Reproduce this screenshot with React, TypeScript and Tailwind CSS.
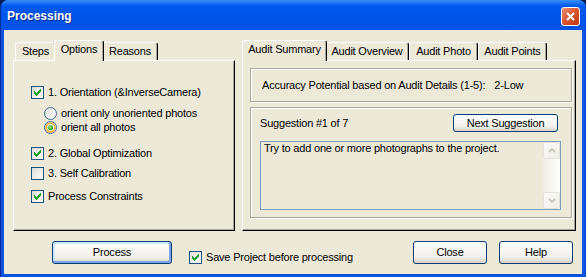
import React from 'react';

const BEIGE = 'bg-[#ece9d8]';

function Check({ checked }: { checked?: boolean }) {
  return (
    <span className="relative inline-block w-[13px] h-[13px] shrink-0 border border-[#1c5180] bg-linear-to-br from-[#dcdcd7] to-white">
      {checked && (
        <svg className="absolute left-[2px] top-[2px]" width="7" height="7" viewBox="0 0 7 7" shapeRendering="crispEdges">
          <path
            d="M6 0h1v1h-1z M5 1h2v1h-2z M0 2h1v1h-1z M4 2h3v1h-3z M0 3h2v1h-2z M3 3h3v1h-3z M0 4h5v1h-5z M1 5h3v1h-3z M2 6h1v1h-1z"
            fill="#21a121"
          />
        </svg>
      )}
    </span>
  );
}

function Radio({ checked, hot, id }: { checked?: boolean; hot?: boolean; id: string }) {
  return (
    <svg width="13" height="13" viewBox="0 0 13 13" className="shrink-0">
      <defs>
        <linearGradient id={id} x1="0" y1="0" x2="1" y2="1">
          <stop offset="0" stopColor="#dcdcd7" />
          <stop offset="1" stopColor="#ffffff" />
        </linearGradient>
        <radialGradient id={id + 'd'} cx="0.4" cy="0.35" r="0.7">
          <stop offset="0" stopColor="#9be38c" />
          <stop offset="1" stopColor="#1d9a13" />
        </radialGradient>
      </defs>
      <circle cx="6.5" cy="6.5" r="6" fill={`url(#${id})`} stroke="#3e6a92" />
      {hot && <circle cx="6.5" cy="6.5" r="4.4" fill="none" stroke="#f6b13c" strokeWidth="1.6" />}
      {checked && <circle cx="6.5" cy="6.5" r="2.6" fill={`url(#${id}d)`} />}
    </svg>
  );
}

function Btn({ children, className = '', isDefault }: { children: React.ReactNode; className?: string; isDefault?: boolean }) {
  return (
    <div
      className={`flex items-center justify-center shrink-0 rounded-[3px] border border-[#003c74] bg-linear-to-b from-white via-[#f2f1ec] via-70% to-[#d8d2c6] ${
        isDefault ? 'shadow-[inset_-1px_-1px_0_1px_#7fa1e8,inset_1px_1px_0_1px_#cee7ff]' : ''
      } ${className}`}
    >
      {children}
    </div>
  );
}

function Tab({ label, selected, className = '' }: { label: string; selected?: boolean; className?: string }) {
  if (selected) {
    return (
      <div
        className={`relative z-10 h-[21px] -mb-px ${BEIGE} border-t border-l border-white border-r border-r-black rounded-t-[3px] shadow-[inset_-1px_0_0_#aca899] flex justify-center pt-[2px] leading-[13px] ${className}`}
      >
        {label}
      </div>
    );
  }
  return (
    <div
      className={`h-[18px] border-t border-l border-white border-r border-r-black rounded-t-[3px] shadow-[inset_-1px_0_0_#aca899] flex justify-center pt-[2px] leading-[13px] ${className}`}
    >
      {label}
    </div>
  );
}

function Panel({ children, className = '' }: { children: React.ReactNode; className?: string }) {
  return (
    <div
      className={`flex-1 flex flex-col border-t border-l border-white border-r border-b border-r-black border-b-black shadow-[inset_-1px_-1px_0_#aca899] ${className}`}
    >
      {children}
    </div>
  );
}

function ScrollBtn({ down }: { down?: boolean }) {
  return (
    <div className="w-[17px] h-[17px] rounded-[2px] border border-[#e4e2da] bg-linear-to-br from-[#fbfbf9] to-[#efeee8] flex items-center justify-center">
      <svg width="8" height="5" viewBox="0 0 8 5">
        <path d={down ? 'M1 1 L4 4 L7 1' : 'M1 4 L4 1 L7 4'} fill="none" stroke="#c9c7ba" strokeWidth="1.8" />
      </svg>
    </div>
  );
}

export default function App() {
  return (
    <div className="w-[586px] h-[277px] overflow-hidden bg-[#0b1d4d] font-['Liberation_Sans',Arial,sans-serif] text-[11px] tracking-[-0.2px] text-black select-none">
      <div className="h-full flex flex-col rounded-t-[8px] bg-[#0a52e0] border-l border-[#0a2a9c] overflow-hidden">
        {/* title bar */}
        <div className="h-[30px] shrink-0 flex items-start pl-[6px] pr-[6px] bg-linear-to-b from-[#3a8ff8] via-[#0058ee] via-20% to-[#0152e4]">
          <span className="mt-[9px] leading-[14px] text-[12px] font-bold tracking-[0px] text-white [text-shadow:1px_1px_0_#0f2a8c]">
            Processing
          </span>
          <div className="ml-auto mt-[7px] w-[19px] h-[19px] rounded-[3px] border border-white bg-linear-to-br from-[#ec8b70] via-[#d9552f] to-[#bf3510] flex items-center justify-center">
            <svg width="9" height="9" viewBox="0 0 9 9">
              <path d="M1 1 L8 8 M8 1 L1 8" stroke="white" strokeWidth="2" />
            </svg>
          </div>
        </div>

        {/* client area */}
        <div className={`flex-1 ml-[3px] mr-[4px] mb-[3px] ${BEIGE} flex flex-col pt-[10px] pl-[9px] pr-[6px]`}>
          <div className="h-[191px] flex gap-[7px]">
            {/* left tab control */}
            <div className="w-[222px] flex flex-col">
              <div className="h-[20px] flex items-end pl-[2px]">
                <Tab label="Steps" className="w-[41px]" />
                <Tab label="Options" selected className="w-[50px] -mx-[2px]" />
                <Tab label="Reasons" className="w-[56px]" />
              </div>
              <Panel className="pt-[25px] pl-[17px]">
                <div className="h-[13px] flex items-center gap-[4px] leading-[13px]">
                  <Check checked />
                  <span>1. Orientation (&amp;InverseCamera)</span>
                </div>
                <div className="mt-[8px] ml-[13px] h-[13px] flex items-center gap-[4px] leading-[13px]">
                  <Radio id="r1" />
                  <span>orient only unoriented photos</span>
                </div>
                <div className="mt-[1px] ml-[13px] h-[13px] flex items-center gap-[4px] leading-[13px]">
                  <Radio id="r2" checked hot />
                  <span>orient all photos</span>
                </div>
                <div className="mt-[13px] h-[13px] flex items-center gap-[4px] leading-[13px]">
                  <Check checked />
                  <span>2. Global Optimization</span>
                </div>
                <div className="mt-[7px] h-[13px] flex items-center gap-[4px] leading-[13px]">
                  <Check />
                  <span>3. Self Calibration</span>
                </div>
                <div className="mt-[10px] h-[13px] flex items-center gap-[4px] leading-[13px]">
                  <Check checked />
                  <span>Process Constraints</span>
                </div>
              </Panel>
            </div>

            {/* right tab control */}
            <div className="w-[334px] flex flex-col">
              <div className="h-[20px] flex items-end">
                <Tab label="Audit Summary" selected className="w-[85px] -mr-[2px]" />
                <Tab label="Audit Overview" className="w-[84px]" />
                <Tab label="Audit Photo" className="w-[69px]" />
                <Tab label="Audit Points" className="w-[69px]" />
              </div>
              <Panel>
                <div className="mt-[7px] ml-[7px] w-[322px] h-[34px] border border-[#aca899] shadow-[inset_1px_1px_0_#fff,1px_1px_0_#fff] flex items-center pl-[11px] leading-[13px]">
                  <span>Accuracy Potential based on Audit Details (1-5):</span>
                  <span className="ml-[9px]">2-Low</span>
                </div>
                <div className="mt-[5px] ml-[7px] w-[322px] h-[111px] border border-[#aca899] shadow-[inset_1px_1px_0_#fff,1px_1px_0_#fff] flex flex-col pt-[6px] pl-[9px]">
                  <div className="w-[301px] h-[18px] flex items-center justify-between leading-[13px]">
                    <span>Suggestion #1 of 7</span>
                    <Btn className="w-[105px] h-[18px] mr-[3px]">Next Suggestion</Btn>
                  </div>
                  <div className="mt-[9px] w-[301px] h-[69px] border border-[#7f9db9] flex">
                    <div className="flex-1 pl-[3px] leading-[13px]">Try to add one or more photographs to the project.</div>
                    <div className="w-[17px] flex flex-col bg-linear-to-r from-[#f1efe8] to-[#fdfdfb]">
                      <ScrollBtn />
                      <div className="flex-1" />
                      <ScrollBtn down />
                    </div>
                  </div>
                </div>
              </Panel>
            </div>
          </div>

          {/* bottom buttons */}
          <div className="mt-[10px] flex items-start">
            <Btn isDefault className="ml-[39px] w-[120px] h-[23px]">Process</Btn>
            <div className="ml-[17px] mt-[10px] h-[13px] flex items-center gap-[4px] leading-[13px]">
              <Check checked />
              <span>Save Project before processing</span>
            </div>
            <Btn className="ml-auto w-[74px] h-[23px]">Close</Btn>
            <Btn className="ml-[12px] mr-[3px] w-[74px] h-[23px]">Help</Btn>
          </div>
        </div>
      </div>
    </div>
  );
}
